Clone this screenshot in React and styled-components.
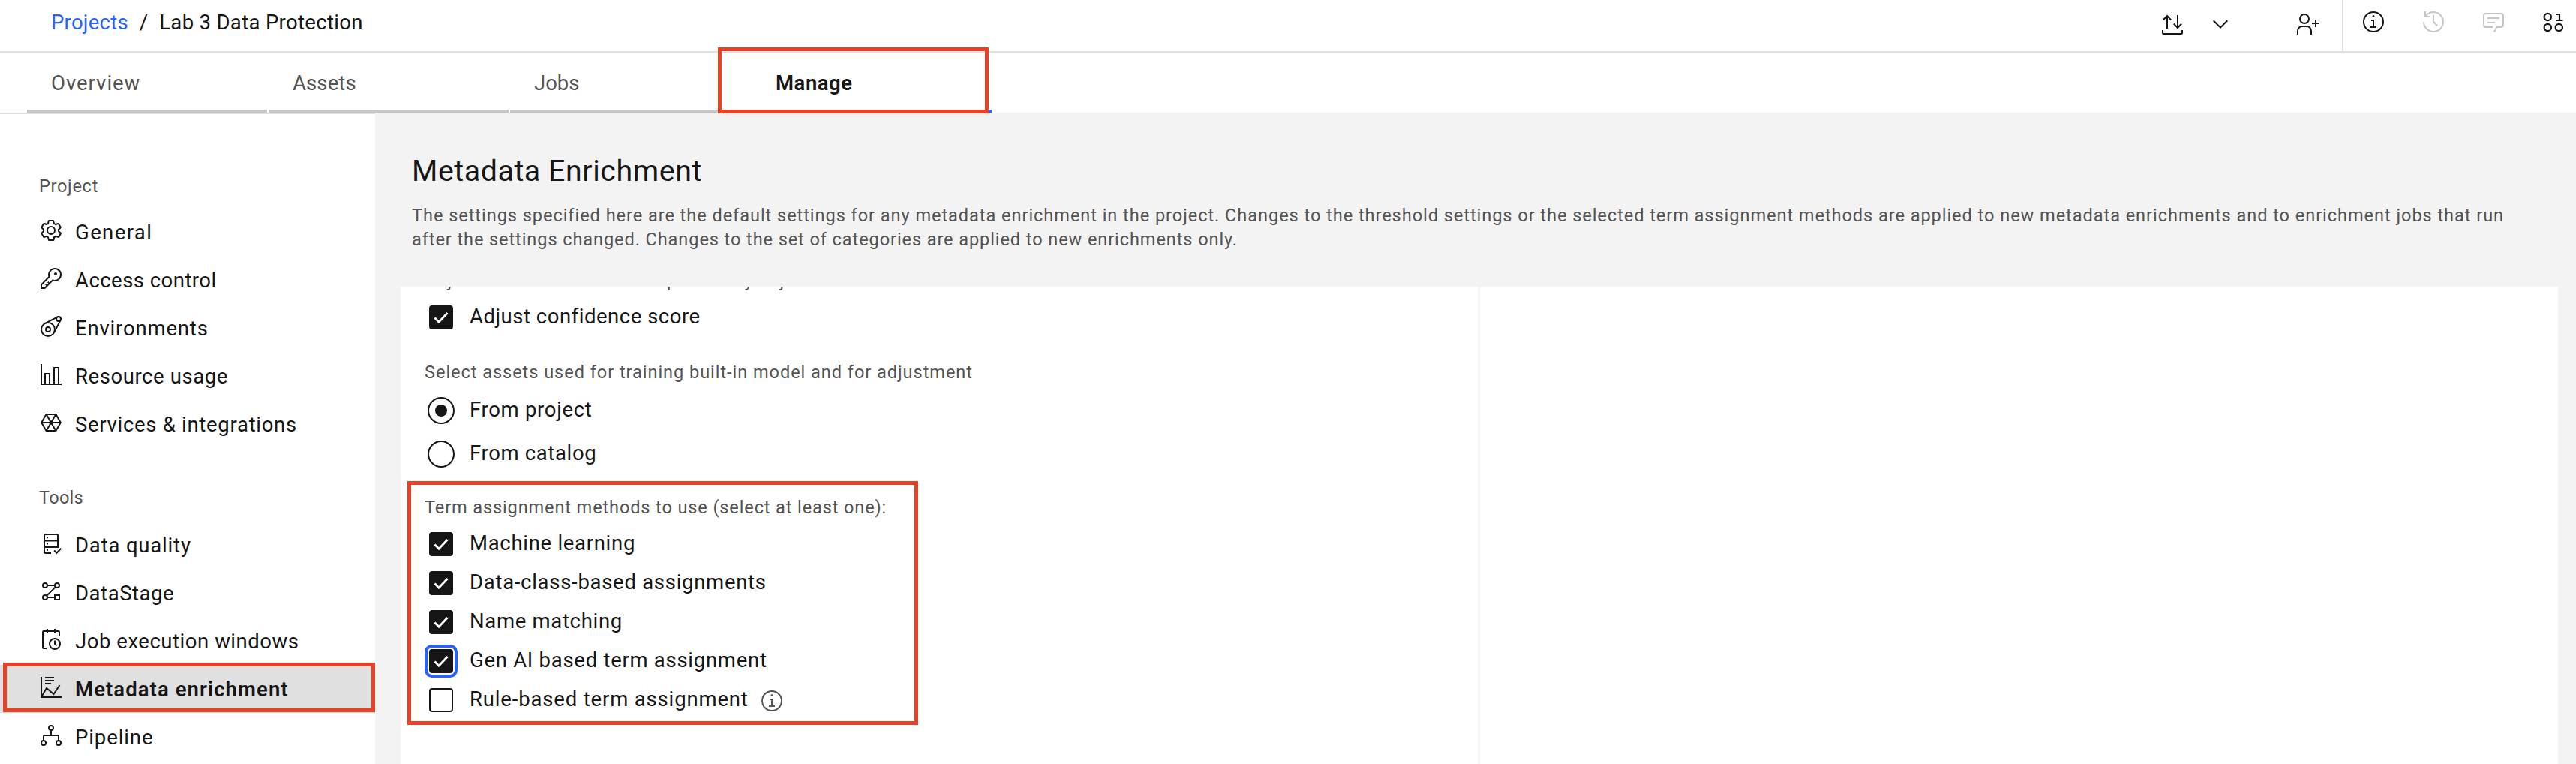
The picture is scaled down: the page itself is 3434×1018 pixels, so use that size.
import React from "react";
import styled, { createGlobalStyle, css } from "styled-components";

const ink = "#161616";
const muted = "#545454";
const rule = "#e0e0e0";
const blue = "#2962fb";
const canvas = "#f3f3f3";
const red = "#ea4025";

const GlobalStyle = createGlobalStyle`
  *, *::before, *::after { box-sizing: border-box; }
  body {
    margin: 0;
    background: #fff;
    color: ${ink};
    font-family: Roboto, "Noto Sans", sans-serif;
    overflow: hidden;
  }
`;

const Page = styled.div`
  display: flex;
  flex-direction: column;
  height: 1018px;
  overflow: hidden;
`;

const Text = styled.span`
  font-size: 27.5px;
  line-height: 36px;
  white-space: nowrap;
  letter-spacing: ${(p) => p.$track || 0}px;
`;

const Highlight = styled.div`
  position: absolute;
  z-index: 2;
  pointer-events: none;
  border: 5px solid ${red};
  top: ${(p) => p.$top}px;
  left: ${(p) => p.$left}px;
  width: ${(p) => p.$width}px;
  height: ${(p) => p.$height}px;
`;

/* Header */
const Header = styled.header`
  flex: none;
  display: flex;
  height: 70px;
  border-bottom: 2px solid ${rule};
`;

const Breadcrumb = styled.nav`
  flex: 1;
  display: flex;
  align-items: center;
  padding: 0 0 9px 68px;
`;

const CrumbLink = styled(Text)`
  color: ${blue};
`;

const Slash = styled(Text)`
  margin: 0 15px 0 15px;
`;

const Actions = styled.div`
  display: flex;
  align-items: flex-start;
  gap: 84px;
  padding: 16px 30px 0 0;
`;

const ActionPair = styled.div`
  display: flex;
  gap: 32px;
`;

const PanelTools = styled.div`
  display: flex;
  width: 312px;
  overflow: hidden;
  border-left: 2px solid ${rule};
`;

const ToolButton = styled.button`
  flex: none;
  display: flex;
  align-items: flex-start;
  width: 80px;
  padding: 13px 24px 0;
  border: 0;
  background: none;
  color: ${(p) => (p.$disabled ? "#c6c6c6" : ink)};
`;

const Glyph = styled.svg`
  display: block;
  flex: none;
  width: 32px;
  height: 32px;
  overflow: visible;
`;

/* Tabs */
const TabBar = styled.div`
  flex: none;
  display: flex;
  gap: 2px;
  height: 80px;
  padding-left: 36px;
`;

const Tab = styled.div`
  position: relative;
  display: flex;
  align-items: center;
  width: 320px;
  padding: 5px 0 0 32px;
  border-bottom: 4px solid ${(p) => (p.$active ? blue : "#c6c6c6")};
  color: ${(p) => (p.$active ? ink : muted)};
  font-weight: ${(p) => (p.$active ? 600 : 400)};
`;

/* Body */
const Body = styled.div`
  flex: 1;
  min-height: 0;
  display: flex;
`;

const Sidebar = styled.aside`
  flex: none;
  width: 500px;
  padding-top: 80px;
  border-top: 2px solid ${rule};
`;

const NavGroup = styled.section`
  margin-bottom: 50px;
`;

const NavLabel = styled.div`
  padding: 0 0 ${(p) => p.$after}px 52px;
  font-size: 23.6px;
  line-height: 32px;
  letter-spacing: ${(p) => p.$track}px;
  color: ${muted};
`;

const NavRow = styled.div`
  position: relative;
  display: flex;
  align-items: center;
  gap: 16px;
  height: 64px;
  padding-left: 52px;
  ${(p) => p.$selected && css`
    background: ${rule};
    font-weight: 600;
  `}
  & > svg { margin-bottom: 4px; }
  & > span { padding-top: 2px; }
`;

const Main = styled.main`
  flex: 1;
  min-width: 0;
  display: flex;
  flex-direction: column;
  padding: 54px 24px 0 34px;
  background: ${canvas};
`;

const Title = styled.h1`
  margin: 0 0 19px 15px;
  font-size: 39.3px;
  font-weight: 400;
  line-height: 48px;
  letter-spacing: 0.58px;
`;

const Description = styled.p`
  margin: 0 0 47px 15px;
  font-size: 23.6px;
  line-height: 32px;
  color: ${muted};
`;

const Line = styled.span`
  display: block;
  white-space: nowrap;
  letter-spacing: ${(p) => p.$track}px;
`;

const Columns = styled.div`
  flex: 1;
  min-height: 0;
  display: grid;
  grid-template-columns: 1436px 1fr;
  gap: 3px;
`;

const Column = styled.div`
  min-width: 0;
  overflow: hidden;
  padding-left: 32px;
  background: #fff;
`;

const FieldGroup = styled.div`
  position: relative;
  margin-top: ${(p) => p.$top}px;
`;

const FieldLabel = styled.div`
  margin-bottom: ${(p) => p.$after}px;
  font-size: 23.6px;
  line-height: 32px;
  white-space: nowrap;
  letter-spacing: ${(p) => p.$track}px;
  color: ${muted};
`;

const CheckRow = styled.label`
  display: flex;
  align-items: center;
  gap: 22px;
  height: 52px;
  padding-left: 6px;
  & > span:nth-child(2) { padding-bottom: 3px; }
`;

const RadioRow = styled(CheckRow)`
  gap: 20px;
  height: 58px;
  padding-left: 4px;
`;

const CheckBox = styled.span`
  flex: none;
  width: 32px;
  height: 32px;
  border-radius: 4px;
  border: 2px solid ${ink};
  background: ${(p) => (p.$checked ? ink : "#fff")};
  color: #fff;
  ${(p) => p.$focused && css`
    box-shadow: 0 0 0 2px #fff, 0 0 0 6px ${blue};
  `}
  & > svg { margin: -2px; }
`;

const RadioDot = styled.span`
  flex: none;
  display: grid;
  place-items: center;
  width: 36px;
  height: 36px;
  border: 2px solid ${ink};
  border-radius: 50%;
  &::after {
    content: "";
    width: 16px;
    height: 16px;
    border-radius: 50%;
    background: ${(p) => (p.$checked ? ink : "transparent")};
  }
`;

const InfoMark = styled.span`
  margin: 2px 0 0 -7px;
  color: ${muted};
`;

function Solid({ children, box = 32 }) {
  return <Glyph viewBox={`0 0 ${box} ${box}`} fill="currentColor">{children}</Glyph>;
}

function Stroked({ children, weight = 2 }) {
  return (
    <Glyph viewBox="0 0 32 32" fill="none" stroke="currentColor" strokeWidth={weight}>
      {children}
    </Glyph>
  );
}

const TransferIcon = () => (
  <Stroked>
    <path d="M9 22V5M3.8 10.5 9 5l5.2 5.5M23 4v17M17.8 15.5 23 21l5.200-5.500M3 24v4a1 1 0 0 0 1 1h24a1 1 0 0 0 1-1v-4" />
  </Stroked>
);
const ChevronIcon = () => (
  <Solid><path d="M16 22 6 12l1.4-1.4 8.6 8.6 8.6-8.6L26 12z" /></Solid>
);
const AddUserIcon = () => (
  <Solid>
    <path d="M32 14h-4v-4h-2v4h-4v2h4v4h2v-4h4zM12 4a5 5 0 1 1-5 5 5 5 0 0 1 5-5m0-2a7 7 0 1 0 7 7 7 7 0 0 0-7-7zM22 30h-2v-5a5 5 0 0 0-5-5H9a5 5 0 0 0-5 5v5H2v-5a7 7 0 0 1 7-7h6a7 7 0 0 1 7 7z" />
  </Solid>
);
const InfoIcon = () => (
  <Solid>
    <path d="M17 22v-9h-4v2h2v7h-3v2h8v-2zM16 7a1.5 1.5 0 1 0 1.5 1.5A1.5 1.5 0 0 0 16 7z" />
    <path d="M16 30a14 14 0 1 1 14-14 14 14 0 0 1-14 14zm0-26a12 12 0 1 0 12 12A12 12 0 0 0 16 4z" />
  </Solid>
);
const HistoryIcon = () => (
  <Solid>
    <path d="M20.59 22 15 16.41V7h2v8.58l5 5.01z" />
    <path d="M16 2A13.94 13.94 0 0 0 6 6.23V2H4v8h8V8H7.08A12 12 0 1 1 4 16H2A14 14 0 1 0 16 2z" />
  </Solid>
);
const ChatIcon = () => (
  <Solid>
    <path d="M17.74 30 16 29l4-7h6a2 2 0 0 0 2-2V8a2 2 0 0 0-2-2H6a2 2 0 0 0-2 2v12a2 2 0 0 0 2 2h9v2H6a4 4 0 0 1-4-4V8a4 4 0 0 1 4-4h20a4 4 0 0 1 4 4v12a4 4 0 0 1-4 4h-4.84zM8 10h16v2H8zM8 16h10v2H8z" />
  </Solid>
);
const DataIcon = () => (
  <Stroked weight={2.2}>
    <circle cx="8.3" cy="9.5" r="4.7" />
    <circle cx="8.3" cy="23.5" r="4.7" />
    <circle cx="23.3" cy="23.5" r="4.7" />
    <path d="M19.5 6h4.5v8M19 14h9.5" />
  </Stroked>
);
const GearIcon = () => (
  <Solid box={16}>
    <path fillRule="evenodd" d="M13.5 8.4c0-.1 0-.3 0-.4 0-.1 0-.3 0-.4l1-.8c.4-.3.4-.9.2-1.3l-1.2-2C13.3 3.2 13 3 12.6 3c-.1 0-.2 0-.3.1l-1.2.4c-.2-.1-.4-.3-.7-.4l-.3-1.3C10.1 1.3 9.7 1 9.2 1H6.8c-.5 0-.9.3-1 .8l-.2 1.3c-.3.1-.5.2-.7.3L3.7 3c-.1 0-.2 0-.3 0-.4 0-.7.2-.9.5l-1.2 2c-.2.4-.1.9.3 1.3l.9.8c0 .1 0 .3 0 .4 0 .1 0 .3 0 .4l-.9.8c-.4.3-.5.9-.2 1.3l1.2 2c.1.3.4.5.8.5.1 0 .2 0 .3-.1l1.2-.4c.2.1.4.3.7.4l.3 1.3c.1.5.5.8 1 .8h2.4c.5 0 .9-.3 1-.8l.3-1.3c.2-.1.4-.2.7-.4l1.2.4c.1 0 .2.1.3.1.4 0 .7-.2.9-.5l1.1-2c.2-.4.2-.9-.2-1.3zM12.6 12l-1.7-.6c-.4.3-.9.6-1.4.8L9.2 14H6.8l-.4-1.8c-.5-.2-.9-.5-1.4-.8L3.4 12l-1.2-2 1.4-1.2c-.1-.5-.1-1.1 0-1.6L2.2 6l1.2-2 1.7.6c.4-.4.9-.6 1.4-.8L6.8 2h2.4l.4 1.8c.5.2.9.5 1.4.8L12.6 4l1.2 2-1.4 1.2c.1.5.1 1.1 0 1.6l1.4 1.2z" />
    <path fillRule="evenodd" d="M8 11a3 3 0 1 1 0-6 3 3 0 0 1 0 6zm0-5a2 2 0 1 0 0 4 2 2 0 0 0 0-4z" />
  </Solid>
);
const KeyIcon = () => (
  <Solid>
    <path d="M21 2a8.998 8.998 0 0 0-8.612 11.612L2 24v6h6l10.388-10.388A9 9 0 1 0 21 2zm0 16a7.013 7.013 0 0 1-2.032-.302l-1.147-.348-.847.847-3.181 3.181L12.414 20 11 21.414l1.379 1.379-1.586 1.586L9.414 23 8 24.414l1.379 1.379L7.172 28H4v-3.172l9.802-9.802.847-.847-.348-1.147A7 7 0 1 1 21 18z" />
    <circle cx="22" cy="10" r="2" />
  </Solid>
);
const BeltIcon = () => (
  <Stroked>
    <circle cx="12" cy="20" r="9" />
    <circle cx="12" cy="20" r="3" />
    <circle cx="26" cy="6" r="3" />
    <path d="M24.6 3.3 8.2 11.8M28.7 7.4 20.2 23.8" />
  </Stroked>
);
const BarsIcon = () => (
  <Stroked><path d="M3 2v27h27M8 29V15h6v14M20 29V7h6v22" /></Stroked>
);
const HexIcon = () => (
  <Stroked>
    <path d="M3.2 16 9.6 5h12.8l6.4 11-6.4 11H9.6zM3.2 16h25.6M9.6 5l12.8 22M22.4 5 9.6 27" />
    <circle cx="16" cy="16" r="1.6" fill="currentColor" />
  </Stroked>
);
const QualityIcon = () => (
  <Stroked>
    <path d="M16 29H8.5A1.5 1.5 0 0 1 7 27.5v-22A1.5 1.5 0 0 1 8.5 4h15A1.5 1.5 0 0 1 25 5.5V21H7M7 12.5h18M20 25.5l3.4 3.3 6-6" />
    <path d="M10 8.3h2M10 16.5h2M10 24.7h2" />
  </Stroked>
);
const FlowIcon = () => (
  <Stroked>
    <circle cx="8" cy="8" r="3" />
    <circle cx="24" cy="8" r="3" />
    <circle cx="8" cy="24" r="3" />
    <path d="M21 21h6v6h-6zM11 8h10M11 24h10M21.9 10.1 10.1 21.9" />
  </Stroked>
);
const ScheduleIcon = () => (
  <Stroked>
    <path d="M10 28H6a1 1 0 0 1-1-1V6a1 1 0 0 1 1-1h20a1 1 0 0 1 1 1v6M11 2v6M21 2v6M21 17.5V22l2.5 2.5" />
    <circle cx="21" cy="22" r="7" />
  </Stroked>
);
const EnrichIcon = () => (
  <Stroked>
    <path d="M3 2v27h27M8 3h12M8 7h12M8 11h8M3.5 28 10 17l9.500 8L27.500 13" />
  </Stroked>
);
const TreeIcon = () => (
  <Stroked>
    <circle cx="16" cy="6" r="3" />
    <circle cx="6" cy="26" r="3" />
    <circle cx="26" cy="26" r="3" />
    <path d="M16 9v7M6 23v-6a1 1 0 0 1 1-1h18a1 1 0 0 1 1 1v6" />
  </Stroked>
);

const tabs = [
  { label: "Overview", track: 0.97 },
  { label: "Assets", track: 0.1 },
  { label: "Jobs", track: 0 },
  { label: "Manage", track: 0.54, active: true },
];

const navGroups = [
  {
    label: "Project", track: 0.67, after: 13,
    items: [
      { label: "General", track: 1.4, Icon: GearIcon },
      { label: "Access control", track: 0.46, Icon: KeyIcon },
      { label: "Environments", track: 0.82, Icon: BeltIcon },
      { label: "Resource usage", track: 0.58, Icon: BarsIcon },
      { label: "Services & integrations", track: 0.7, Icon: HexIcon },
    ],
  },
  {
    label: "Tools", track: 0.25, after: 15,
    items: [
      { label: "Data quality", track: 0.82, Icon: QualityIcon },
      { label: "DataStage", track: 0.55, Icon: FlowIcon },
      { label: "Job execution windows", track: 0.54, Icon: ScheduleIcon },
      { label: "Metadata enrichment", track: 1.08, Icon: EnrichIcon, selected: true },
      { label: "Pipeline", track: 0.9, Icon: TreeIcon },
    ],
  },
];

const methods = [
  { label: "Machine learning", track: 0.7, checked: true },
  { label: "Data-class-based assignments", track: 0.71, checked: true },
  { label: "Name matching", track: 0.68, checked: true },
  { label: "Gen AI based term assignment", track: 0.72, checked: true, focused: true },
  { label: "Rule-based term assignment", track: 0.84, info: true },
];

function Check({ label, track, checked, focused, info }) {
  return (
    <CheckRow>
      <CheckBox $checked={checked} $focused={focused}>
        {checked && <Stroked weight={2.8}><path d="m7.5 16.5 5.5 5.7L24.5 10" /></Stroked>}
      </CheckBox>
      <Text $track={track}>{label}</Text>
      {info && <InfoMark><InfoIcon /></InfoMark>}
    </CheckRow>
  );
}

function Radio({ label, track, checked }) {
  return (
    <RadioRow>
      <RadioDot $checked={checked} />
      <Text $track={track}>{label}</Text>
    </RadioRow>
  );
}

export default function App() {
  return (
    <Page>
      <GlobalStyle />
      <Header>
        <Breadcrumb>
          <CrumbLink $track={0.25}>Projects</CrumbLink>
          <Slash>/</Slash>
          <Text $track={0.33}>Lab 3 Data Protection</Text>
        </Breadcrumb>
        <Actions>
          <ActionPair>
            <TransferIcon />
            <ChevronIcon />
          </ActionPair>
          <AddUserIcon />
        </Actions>
        <PanelTools>
          <ToolButton><InfoIcon /></ToolButton>
          <ToolButton $disabled><HistoryIcon /></ToolButton>
          <ToolButton $disabled><ChatIcon /></ToolButton>
          <ToolButton><DataIcon /></ToolButton>
        </PanelTools>
      </Header>
      <TabBar>
        {tabs.map((tab) => (
          <Tab key={tab.label} $active={tab.active}>
            <Text $track={tab.track}>{tab.label}</Text>
            {tab.active && <Highlight $top={-7} $left={-45} $width={361} $height={88} />}
          </Tab>
        ))}
      </TabBar>
      <Body>
        <Sidebar>
          {navGroups.map((group) => (
            <NavGroup key={group.label}>
              <NavLabel $track={group.track} $after={group.after}>{group.label}</NavLabel>
              {group.items.map(({ label, track, Icon, selected }) => (
                <NavRow key={label} $selected={selected}>
                  <Icon />
                  <Text $track={track}>{label}</Text>
                  {selected && <Highlight $top={-3} $left={4} $width={496} $height={66} />}
                </NavRow>
              ))}
            </NavGroup>
          ))}
        </Sidebar>
        <Main>
          <Title>Metadata Enrichment</Title>
          <Description>
            <Line $track={0.93}>
              The settings specified here are the default settings for any metadata enrichment in the project. Changes to the threshold settings or the selected term assignment methods are applied to new metadata enrichments and to enrichment jobs that run
            </Line>
            <Line $track={0.885}>
              after the settings changed. Changes to the set of categories are applied to new enrichments only.
            </Line>
          </Description>
          <Columns>
            <Column>
              <FieldGroup $top={-24}>
                <FieldLabel $track={0.94} $after={7}>Adjust confidence based on previously adjusted business terms.</FieldLabel>
                <Check label="Adjust confidence score" track={0.52} checked />
              </FieldGroup>
              <FieldGroup $top={31}>
                <FieldLabel $track={0.93} $after={6}>Select assets used for training built-in model and for adjustment</FieldLabel>
                <Radio label="From project" track={0.68} checked />
                <Radio label="From catalog" track={0.64} />
              </FieldGroup>
              <FieldGroup $top={26}>
                <FieldLabel $track={0.85} $after={7}>Term assignment methods to use (select at least one):</FieldLabel>
                {methods.map((method) => <Check key={method.label} {...method} />)}
                <Highlight $top={-19} $left={-23} $width={681} $height={325} />
              </FieldGroup>
            </Column>
            <Column />
          </Columns>
        </Main>
      </Body>
    </Page>
  );
}
